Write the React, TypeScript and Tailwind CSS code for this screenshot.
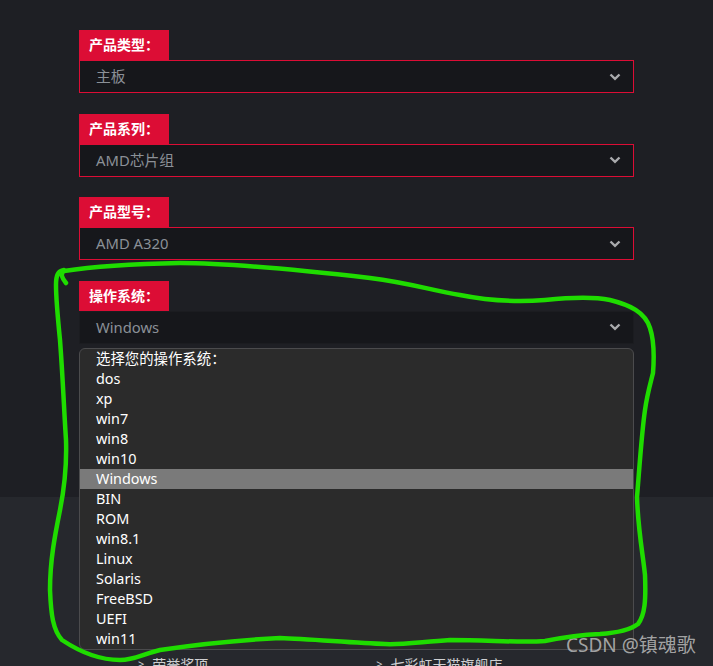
import React from "react";

const groups = [
  { label: "产品类型：", value: "主板", red: true },
  { label: "产品系列：", value: "AMD芯片组", red: true },
  { label: "产品型号：", value: "AMD A320", red: true },
  { label: "操作系统：", value: "Windows", red: false },
];

const options = [
  "选择您的操作系统：",
  "dos",
  "xp",
  "win7",
  "win8",
  "win10",
  "Windows",
  "BIN",
  "ROM",
  "win8.1",
  "Linux",
  "Solaris",
  "FreeBSD",
  "UEFI",
  "win11",
];

function Chevron() {
  return (
    <svg width="12" height="8" viewBox="0 0 12 8" className="shrink-0">
      <path d="M1.5 1.5 L6 5.8 L10.5 1.5" fill="none" stroke="#a9aaad" strokeWidth="2.4" />
    </svg>
  );
}

export default function App() {
  return (
    <div
      className="relative w-[713px] h-[666px] overflow-hidden bg-[#1e1f24]"
      style={{ fontFamily: '"Noto Sans", "Noto Sans CJK SC", sans-serif' }}
    >
      <div className="h-[497px] pt-[30px] pl-[79px] flex flex-col gap-[20.5px]">
        {groups.map((g) => (
          <div key={g.label} className="flex flex-col w-[555px]">
            <div className="w-[90px] h-[30px] bg-[#dc0d35] text-white font-bold text-[14px] leading-[30px] pl-[10px]">
              {g.label}
            </div>
            <div
              className={
                "h-[33px] flex items-center justify-between pl-[16px] pr-[12px] text-[14.8px] text-[#8b9097] bg-[#16171b] border " +
                (g.red ? "border-[#dc0d35]" : "border-[#1b1c20]")
              }
            >
              <span>{g.value}</span>
              <Chevron />
            </div>
          </div>
        ))}
      </div>
      <div className="h-[169px] bg-[#26282d] pt-[157px] flex text-[14px] text-[#cfd0d2]">
        <div className="ml-[138px] flex gap-[8px] items-center h-[20px]">
          <span className="text-[11px]">&gt;</span>
          <span>荣誉奖项</span>
        </div>
        <div className="ml-[168px] flex gap-[8px] items-center h-[20px]">
          <span className="text-[11px]">&gt;</span>
          <span>七彩虹天猫旗舰店</span>
        </div>
      </div>

      {/* dropdown menu */}
      <div className="absolute left-[79px] top-[348px] w-[555px] rounded-[6px] border border-[#4b4b4d] bg-[#2b2b2b] overflow-hidden">
        {options.map((o) => (
          <div
            key={o}
            className={
              "h-[20px] leading-[20px] pl-[16px] text-[14.4px] text-white " +
              (o === "Windows" ? "bg-[#7a7a7a]" : "")
            }
          >
            {o}
          </div>
        ))}
      </div>

      {/* watermark */}
      <div className="absolute left-[566px] top-[633px] text-[19px] leading-[24px] text-[#c4c4c4]/80">
        CSDN @镇魂歌
      </div>

      {/* hand-drawn annotation */}
      <svg className="absolute left-0 top-0 pointer-events-none" width="713" height="666" viewBox="0 0 713 666">
        <path
          d="M66 283 C62 278 60 274 64 271 C90 267 130 264 180 263 C230 263 300 270 370 278 C410 283 430 290 460 295 C490 301 520 302 545 300 C565 298 590 296 610 300 C630 305 645 312 650 328 C654 340 654 360 653 373 C650 385 647 395 645 410 C642 430 640 460 637 497 C638 530 643 555 645 575 C646 600 645 615 638 624 C630 630 615 633 600 634 C575 635 560 638 545 641 C520 643 490 640 450 640 C420 642 400 645 385 644 C355 643 310 639 280 638 C240 640 200 644 160 650 C140 655 135 660 120 660 C100 660 80 652 62 640 C53 630 51 615 50 590 C50 560 55 535 60 510 C64 490 67 470 66 440 C64 410 63 380 60 340 C58 320 56 300 56 285 C56 275 58 271 64 270"
          fill="none"
          stroke="#1fdc00"
          strokeWidth="4.5"
          strokeLinecap="round"
          strokeLinejoin="round"
        />
      </svg>
    </div>
  );
}
